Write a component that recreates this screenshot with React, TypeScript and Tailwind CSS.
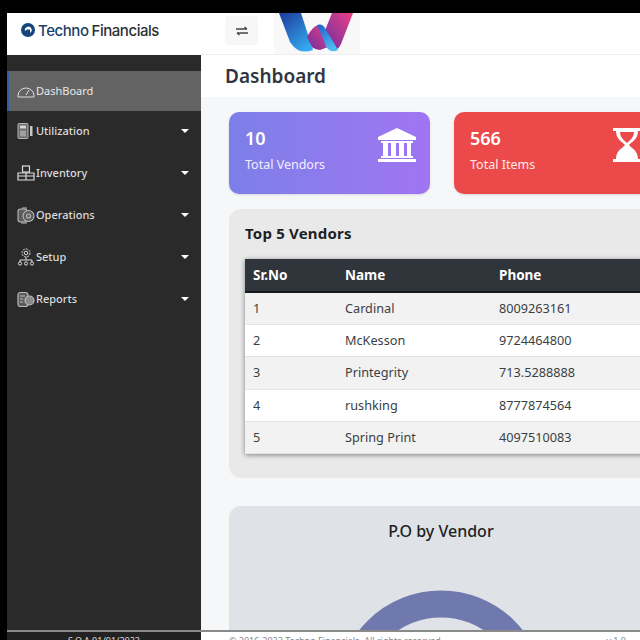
import React from "react";

const rows = [
  ["1", "Cardinal", "8009263161"],
  ["2", "McKesson", "9724464800"],
  ["3", "Printegrity", "713.5288888"],
  ["4", "rushking", "8777874564"],
  ["5", "Spring Print", "4097510083"],
];

function Gauge() {
  return (
    <svg width="18" height="14" viewBox="0 0 18 14" fill="none" stroke="#ddd" strokeWidth="1">
      <path d="M1 12 A8 8 0 0 1 17 12 L17 13 L1 13 Z" />
      <path d="M9 11 L12 6" />
    </svg>
  );
}
function Util() {
  return (
    <svg width="18" height="16" viewBox="0 0 18 16" fill="#aaa">
      <rect x="1" y="0.500" width="10" height="15" rx="1" fill="#6a6a6a" stroke="#b5b5b5" strokeWidth="1" />
      <rect x="3" y="2.500" width="6" height="3" fill="#d5d5d5" />
      <rect x="3" y="7.500" width="6" height="6" fill="#a0a0a0" />
      <rect x="13" y="3" width="2.500" height="10" fill="#c5c5c5" />
    </svg>
  );
}
function Inv() {
  return (
    <svg width="18" height="16" viewBox="0 0 18 16" fill="none" stroke="#ddd" strokeWidth="1.2">
      <rect x="5.500" y="1" width="7" height="6" />
      <path d="M1 8h16v7H1zM1 11h16M9 8v7" />
    </svg>
  );
}
function Ops() {
  return (
    <svg width="18" height="17" viewBox="0 0 18 17" fill="#5c5c5c" stroke="#bbb" strokeWidth="1.1">
      <rect x="1" y="2" width="9" height="13" rx="2.500" />
      <circle cx="11.500" cy="9" r="5.500" />
      <circle cx="11.500" cy="9" r="2" />
      <path d="M5 1h5M4 16h6" />
    </svg>
  );
}
function Setup() {
  return (
    <svg width="18" height="18" viewBox="0 0 18 18" fill="none" stroke="#ddd" strokeWidth="1">
      <circle cx="9" cy="5" r="4" strokeDasharray="2 1" />
      <circle cx="9" cy="5" r="1.800" />
      <path d="M9 9v3M3 14v-2h12v2" />
      <circle cx="3" cy="15.500" r="1.600" />
      <circle cx="9" cy="15.500" r="1.600" />
      <circle cx="15" cy="15.500" r="1.600" />
    </svg>
  );
}
function Rep() {
  return (
    <svg width="18" height="17" viewBox="0 0 18 17" fill="#5c5c5c" stroke="#bbb" strokeWidth="1.200">
      <rect x="1" y="1.500" width="10" height="14" rx="2.500" />
      <circle cx="12.500" cy="9.500" r="4.500" fill="#8a8a8a" />
      <path d="M3 5h5M3 8h3M3 11h3" />
    </svg>
  );
}

const menu = [
  { label: "Utilization", icon: <Util /> },
  { label: "Inventory", icon: <Inv /> },
  { label: "Operations", icon: <Ops /> },
  { label: "Setup", icon: <Setup /> },
  { label: "Reports", icon: <Rep /> },
];

export default function App() {
  return (
    <div className="w-[640px] h-[640px] overflow-hidden bg-black pt-[13px] pl-[7px] flex flex-col font-['Noto_Sans',sans-serif]">
      <div className="flex flex-1 min-h-0">
        <aside className="w-[194px] shrink-0 flex flex-col bg-[#2a2a2a]">
          <div className="h-[42px] bg-white flex items-center pl-[14px] pb-[8px] gap-[3px] shrink-0">
            <svg width="14" height="14" viewBox="0 0 14 14">
              <circle cx="7" cy="7" r="7" fill="#14467c" />
              <path d="M4 8 A3.400 3.400 0 1 1 9 10 L9 6.500 L6 6.500 Z" fill="#fff" />
            </svg>
            <span className="text-[15px] leading-none font-medium tracking-[-0.45px] text-[#1d3f66] font-['Inter',sans-serif]">
              Techno<span className="text-[#2b2f36] ml-[3px]">Financials</span>
            </span>
          </div>
          <nav className="pt-[16px] flex flex-col">
            <div className="h-[40px] bg-[#636363] border-l-2 border-[#2f5f9e] flex items-center pl-[8px] gap-[1px] text-[11px] text-[#e8e8e8]">
              <Gauge />
              <span>DashBoard</span>
            </div>
            {menu.map((m) => (
              <div key={m.label} className="h-[42px] pb-[2px] flex items-center pl-[10px] pr-[12px] gap-[1px] text-[11px] font-medium text-[#dcdcdc]">
                <span className="w-[18px] flex justify-center">{m.icon}</span>
                <span className="flex-1">{m.label}</span>
                <span className="w-0 h-0 border-x-[4px] border-x-transparent border-t-[4px] border-t-white" />
              </div>
            ))}
          </nav>
        </aside>

        <main className="flex-1 min-w-0 flex flex-col bg-[#f6f7f8]">
          <header className="h-[42px] bg-white border-b border-[#eeeeee] flex items-start pl-[24px] pt-[3px] shrink-0 overflow-hidden">
            <button className="w-[33px] h-[29px] rounded bg-[#f7f7f7] flex items-center justify-center">
              <svg width="14" height="10" viewBox="0 0 14 10" fill="none" stroke="#444" strokeWidth="1.300">
                <path d="M1 3h11M9.500 1L12 3M13 7H2M4.500 9L2 7" />
              </svg>
            </button>
            <div className="ml-[16px] -mt-[3px] w-[86px] h-[42px] bg-[#f8f8f8] shrink-0">
              <svg width="86" height="42" viewBox="0 0 86 42">
                <defs>
                  <linearGradient id="a" x1="0" y1="0" x2="0.700" y2="1">
                    <stop offset="0" stopColor="#1c3a9a" />
                    <stop offset="1" stopColor="#35a8ee" />
                  </linearGradient>
                  <linearGradient id="b" x1="0" y1="1" x2="1" y2="0">
                    <stop offset="0" stopColor="#6b2f9e" />
                    <stop offset="1" stopColor="#ec3f86" />
                  </linearGradient>
                  <linearGradient id="c" x1="0" y1="0" x2="0.500" y2="1">
                    <stop offset="0" stopColor="#1f5fc8" />
                    <stop offset="1" stopColor="#4abcf2" />
                  </linearGradient>
                </defs>
                <path d="M5 0 H27 L39 37 Q30 40 24 37 Q19 34 16 29 Z" fill="url(#a)" />
                <path d="M33 24 Q38 14 44 12 Q48 12 50 18 L54 34 L46 37 Q40 36 38 34 Z" fill="url(#b)" />
                <path d="M58 0 H79 L67 31 Q64 38 58 37 L50 20 Z" fill="url(#b)" />
                <path d="M43 12 Q49 10 52 17 L64 37 Q58 40 54 36 Q51 33 50 28 Z" fill="url(#c)" />
              </svg>
            </div>
          </header>

          <div className="h-[42px] bg-white flex items-center pl-[24px] shrink-0">
            <h1 className="text-[19px] font-semibold text-[#2f3640]">Dashboard</h1>
          </div>

          <div className="flex-1 min-h-0 overflow-hidden pt-[15px] pl-[28px] flex flex-col w-[480px]">
            <div className="flex gap-[24px] shrink-0">
              <div className="w-[201px] h-[82px] rounded-[10px] bg-gradient-to-r from-[#7c7fe8] to-[#a075f2] flex items-start justify-between pl-[16px] pr-[14px] pt-[14px] text-white shadow-sm">
                <div>
                  <div className="text-[18px] font-semibold leading-[24px]">10</div>
                  <div className="text-[12.5px] leading-[20px] mt-[5px] text-[#f2eefe]">Total Vendors</div>
                </div>
                <svg className="mt-[2px]" width="38" height="34" viewBox="0 0 38 34" fill="#fff">
                  <path d="M19 0 L38 9 V12 H0 V9 Z" />
                  <rect x="3" y="13" width="32" height="2" />
                  <rect x="5" y="15" width="5" height="13" />
                  <rect x="13" y="15" width="5" height="13" />
                  <rect x="21" y="15" width="5" height="13" />
                  <rect x="29" y="15" width="4" height="13" />
                  <rect x="3" y="28" width="32" height="2" />
                  <rect x="0" y="31" width="38" height="3" />
                </svg>
              </div>
              <div className="w-[201px] h-[82px] rounded-[10px] bg-[#ec4a4a] flex items-start justify-between pl-[16px] pr-[14px] pt-[14px] text-white shrink-0 shadow-sm">
                <div>
                  <div className="text-[18px] font-semibold leading-[24px]">566</div>
                  <div className="text-[12.5px] leading-[20px] mt-[5px] text-[#fdeaea]">Total Items</div>
                </div>
                <svg className="mt-[2px]" width="28" height="34" viewBox="0 0 28 34" fill="#fff">
                  <rect x="0" y="0" width="28" height="3" />
                  <rect x="0" y="31" width="28" height="3" />
                  <path fillRule="evenodd" d="M3 3 H25 C25 12 18 14 16 17 C18 20 25 22 25 31 H3 C3 22 10 20 12 17 C10 14 3 12 3 3 Z M7 4 C7 10 12 13 14 15 C16 13 21 10 21 4 Z" />
                </svg>
              </div>
            </div>

            <section className="mt-[15px] w-[480px] h-[269px] shrink-0 rounded-[12px] bg-[#e9e9ea] px-[16px] pt-[13px]">
              <h2 className="text-[15px] font-bold leading-[22px] tracking-[0.2px] text-[#1c1f24]">Top 5 Vendors</h2>
              <table className="mt-[15px] w-[470px] table-fixed border-collapse bg-white text-[12.7px] text-[#3a3f45] shadow-[0_1px_5px_rgba(0,0,0,0.45)]">
                <colgroup>
                  <col className="w-[100px]" />
                  <col className="w-[154px]" />
                  <col />
                </colgroup>
                <thead>
                  <tr className="h-[33px] bg-[#30343b] border-b-2 border-[#17191c] text-white text-[13.5px]">
                    <th className="text-left pl-[8px] font-bold">Sr.No</th>
                    <th className="text-left font-bold">Name</th>
                    <th className="text-left font-bold">Phone</th>
                  </tr>
                </thead>
                <tbody>
                  {rows.map((r, i) => (
                    <tr key={r[0]} className={"h-[32.4px] border-b border-[#e4e4e4] " + (i % 2 === 0 ? "bg-[#f2f2f2]" : "bg-white")}>
                      <td className="pl-[8px]">{r[0]}</td>
                      <td>{r[1]}</td>
                      <td>{r[2]}</td>
                    </tr>
                  ))}
                </tbody>
              </table>
            </section>

            <section className="mt-[28px] w-[424px] h-[300px] shrink-0 rounded-[12px] bg-[#dfe2e6] pt-[13px] flex flex-col items-center">
              <h2 className="text-[16px] font-medium leading-[24px] text-[#1c1f24]">P.O by Vendor</h2>
              <svg className="mt-[40px]" width="240" height="240" viewBox="0 0 240 240">
                <circle cx="120" cy="120" r="97.500" fill="none" stroke="#7079ae" strokeWidth="29" />
              </svg>
            </section>
          </div>
        </main>
      </div>
      <footer className="h-[10px] shrink-0 bg-white border-t-2 border-[#8a8a8a] flex overflow-hidden">
        <div className="w-[194px] bg-[#222222] text-[#ddd] text-[9px] leading-[14px] pt-[2px] text-center shrink-0">S.O.A 01/01/2023</div>
        <div className="flex-1 pl-[28px] pr-[14px] pt-[2px] text-[9px] leading-[14px] text-[#888] whitespace-nowrap flex justify-between">
          <span>© 2016-2023 Techno Financials. All rights reserved.</span>
          <span>v 1.0</span>
        </div>
      </footer>
    </div>
  );
}
